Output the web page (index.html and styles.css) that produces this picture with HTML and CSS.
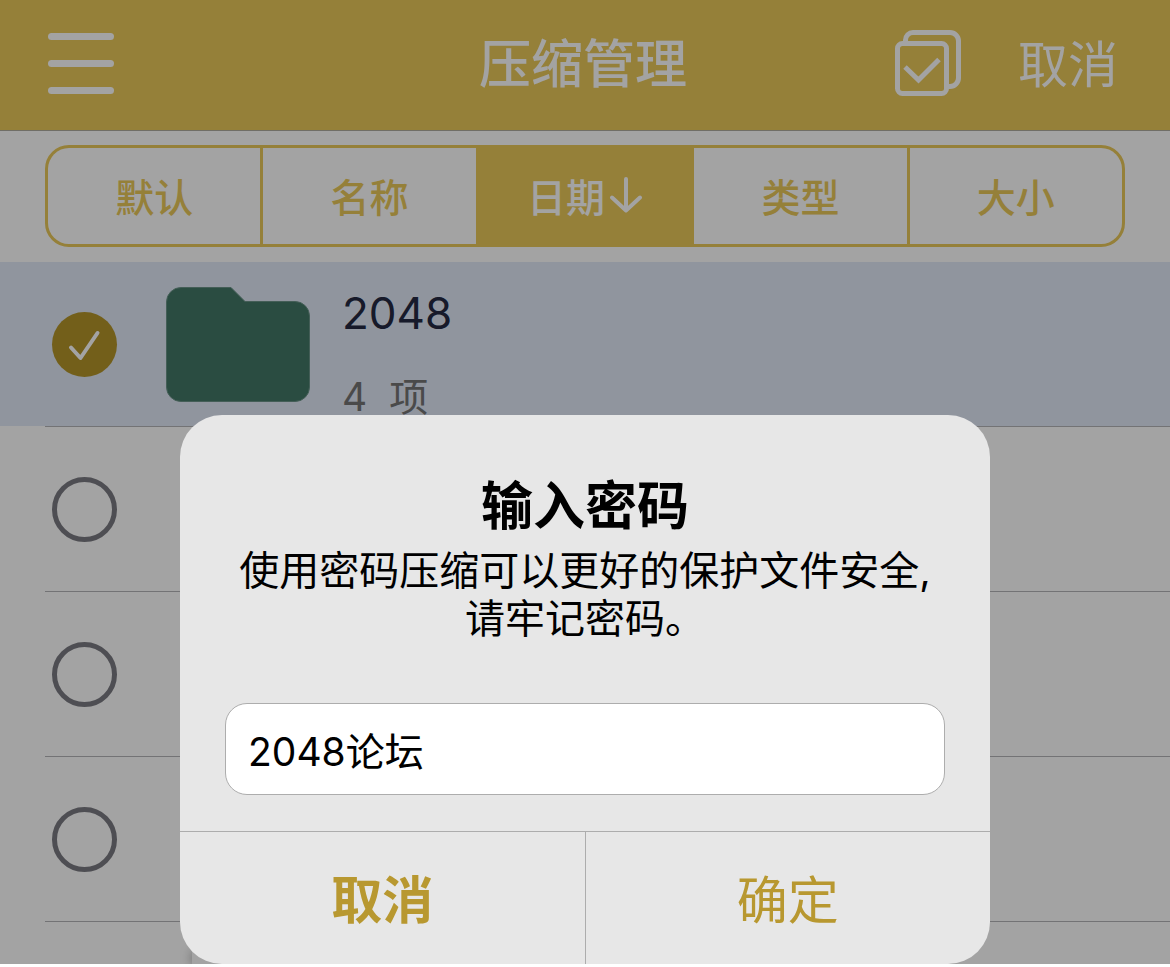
FILE: index.html
```html
<!DOCTYPE html>
<html lang="zh-CN">
<head>
    <meta charset="UTF-8">
    <meta name="viewport" content="width=device-width, initial-scale=1.0">
    <title>压缩管理</title>
    <link rel="stylesheet" href="styles.css">
</head>
<body>
    <div class="app">
        <header class="navbar">
            <button class="menu-btn" type="button" aria-label="菜单">
                <span></span>
                <span></span>
                <span></span>
            </button>
            <h1>压缩管理</h1>
            <div class="nav-actions">
                <button class="icon-btn" type="button" aria-label="全选">
                    <svg width="66" height="66" viewBox="0 0 66 66" fill="none" stroke="currentColor" stroke-width="5">
                        <rect x="2.5" y="13.5" width="49" height="50" rx="5"/>
                        <path d="M10.500 11.500V10a7.500 7.500 0 0 1 7.500-7.500H55a8.500 8.500 0 0 1 8.500 8.500V48a8.500 8.500 0 0 1-8.500 8.500H53"/>
                        <path d="M10 37L23.500 50L44 29.500"/>
                    </svg>
                </button>
                <button class="text-btn" type="button">取消</button>
            </div>
        </header>

        <div class="sort-bar">
            <div class="segments">
                <button type="button">默认</button>
                <button type="button">名称</button>
                <button class="active" type="button">日期<svg width="34" height="36" viewBox="0 0 34 36" fill="none" stroke="currentColor" stroke-width="4" stroke-linecap="round" stroke-linejoin="round"><path d="M17 2V33M3 20.500L17 33.500L31 20.500"/></svg></button>
                <button type="button">类型</button>
                <button type="button">大小</button>
            </div>
        </div>

        <ul class="file-list">
            <li class="file-row selected">
                <label class="check">
                    <input type="checkbox" aria-label="选择 2048" checked>
                    <svg viewBox="0 0 65 65" fill="none" stroke="currentColor" stroke-width="4" stroke-linecap="round" stroke-linejoin="round"><path d="M19 35.500L28.500 46L45.500 21"/></svg>
                </label>
                <svg class="folder" width="144" height="115" viewBox="0 0 144 115">
                    <path d="M15 .5H65L79 14.500H129a14.500 14.500 0 0 1 14.500 14.500V100a14.500 14.500 0 0 1-14.500 14.500H15A14.500 14.500 0 0 1 .5 100V15A14.500 14.500 0 0 1 15 .5Z"/>
                </svg>
                <div class="file-info">
                    <p class="file-name">2048</p>
                    <p class="file-count">4&nbsp; 项</p>
                </div>
            </li>
            <li class="file-row">
                <label class="check"><input type="checkbox" aria-label="选择"></label>
            </li>
            <li class="file-row">
                <label class="check"><input type="checkbox" aria-label="选择"></label>
            </li>
            <li class="file-row">
                <label class="check"><input type="checkbox" aria-label="选择"></label>
            </li>
            <li class="file-row"></li>
        </ul>
        <div class="bottom-sheet"></div>

        <!-- Password dialog -->
        <div class="overlay">
            <form class="dialog" role="dialog" aria-labelledby="dialog-title">
                <div class="dialog-body">
                    <h2 id="dialog-title">输入密码</h2>
                    <label for="password">使用密码压缩可以更好的保护文件安全,<br>请牢记密码。</label>
                    <input id="password" type="text" value="2048论坛">
                </div>
                <div class="dialog-actions">
                    <button class="cancel" type="button">取消</button>
                    <button type="button">确定</button>
                </div>
            </form>
        </div>
    </div>
</body>
</html>
```
FILE: styles.css
```css
* {
    box-sizing: border-box;
}

body {
    margin: 0;
    height: 100vh;
    padding-bottom: 3px;
    overflow: hidden;
    background: #fff;
    font-family: Inter, "Noto Sans CJK SC", sans-serif;
}

h1, h2, p, ul {
    margin: 0;
    padding: 0;
}

button {
    margin: 0;
    padding: 0;
    border: 0;
    background: none;
    color: inherit;
    font: inherit;
}

svg {
    display: block;
}

.app {
    position: relative;
    height: 100%;
    overflow: hidden;
    background: #fff;
}

/* Top bar */
.navbar {
    display: grid;
    grid-template-columns: 1fr auto 1fr;
    align-items: center;
    height: 131px;
    padding: 0 52px 4px 48px;
    border-bottom: 1px solid #b0aca0;
    background: #eac859;
    color: #fff;
}

.navbar h1 {
    padding-top: 4px;
    font-size: 52px;
    font-weight: 500;
    line-height: 76px;
}

.menu-btn {
    display: flex;
    flex-direction: column;
    gap: 20px;
    width: 66px;
}

.menu-btn span {
    height: 7px;
    border-radius: 4px;
    background: #fff;
}

.nav-actions {
    display: flex;
    justify-content: flex-end;
    align-items: center;
    gap: 57px;
}

.text-btn {
    padding-top: 4px;
    font-size: 50px;
    font-weight: 400;
    line-height: 76px;
}

/* Sort segments */
.sort-bar {
    padding: 14px 45px 15px;
}

.segments {
    display: flex;
    gap: 3px;
    height: 102px;
    border: 3px solid #eac859;
    border-radius: 24px;
    overflow: hidden;
    background: #eac859;
}

.segments button {
    display: flex;
    flex: 1;
    justify-content: center;
    align-items: center;
    gap: 4px;
    padding-bottom: 3px;
    background: #fff;
    color: #eac859;
    font-size: 39px;
    font-weight: 500;
}

.segments .active {
    background: #eac859;
    color: #fff;
}

/* File list */
.file-list {
    list-style: none;
}

.file-row {
    position: relative;
    display: flex;
    align-items: center;
    height: 165px;
    padding: 0 52px 1px;
}

.file-row::after {
    content: "";
    position: absolute;
    right: 0;
    bottom: 0;
    left: 45px;
    height: 1px;
    background: #b5b5b7;
}

.selected {
    background: linear-gradient(#e1e9f7, #e1e9f7) no-repeat 0 0 / 100% 164px;
}

.check {
    display: grid;
    width: 65px;
    height: 65px;
    color: #fff;
}

.check input,
.check svg {
    grid-area: 1 / 1;
    width: 65px;
    height: 65px;
}

.check input {
    appearance: none;
    margin: 0;
    border: 5px solid #7b7b82;
    border-radius: 50%;
}

.check input:checked {
    border: 0;
    background: #b4952a;
}

.folder {
    margin-left: 49px;
    fill: #437766;
    stroke: #6b9488;
}

.file-info {
    align-self: flex-start;
    display: flex;
    flex-direction: column;
    gap: 34px;
    margin-left: 32px;
    padding-top: 24px;
}

.file-name {
    color: #242a42;
    font-size: 44px;
    line-height: 54px;
}

.file-count {
    color: #757575;
    font-size: 39px;
    line-height: 46px;
}

/* Sheet that peeks out behind the dialog */
.bottom-sheet {
    position: absolute;
    right: 220px;
    bottom: 0;
    left: 192px;
    height: 12px;
    background: #fff;
    box-shadow: 0 0 12px rgba(0, 0, 0, 0.4);
}

/* Dialog */
.overlay {
    position: absolute;
    inset: 0;
    display: flex;
    justify-content: center;
    align-items: flex-end;
    background: rgba(0, 0, 0, 0.36);
}

.dialog {
    width: min(810px, 90%);
    border-radius: 42px;
    overflow: hidden;
    background: #e7e7e7;
    color: #000;
    text-align: center;
}

.dialog-body {
    display: flex;
    flex-direction: column;
    padding: 54px 45px 36px;
}

.dialog h2 {
    font-size: 52px;
    font-weight: 700;
    line-height: 76px;
}

.dialog label {
    padding-top: 2px;
    font-size: 40px;
    line-height: 48px;
}

.dialog input {
    width: 100%;
    height: 92px;
    margin-top: 60px;
    padding: 0 22px;
    border: 1px solid #adadad;
    border-radius: 22px;
    background: #fff;
    color: #000;
    font: 400 39px Inter, "Noto Sans CJK SC", sans-serif;
}

.dialog-actions {
    display: flex;
    border-top: 1px solid #adadad;
    color: #b89830;
}

.dialog-actions button {
    flex: 1;
    height: 132px;
    padding-bottom: 2px;
    font-size: 51px;
}

.dialog-actions .cancel {
    border-right: 1px solid #adadad;
    font-weight: 700;
}
```
